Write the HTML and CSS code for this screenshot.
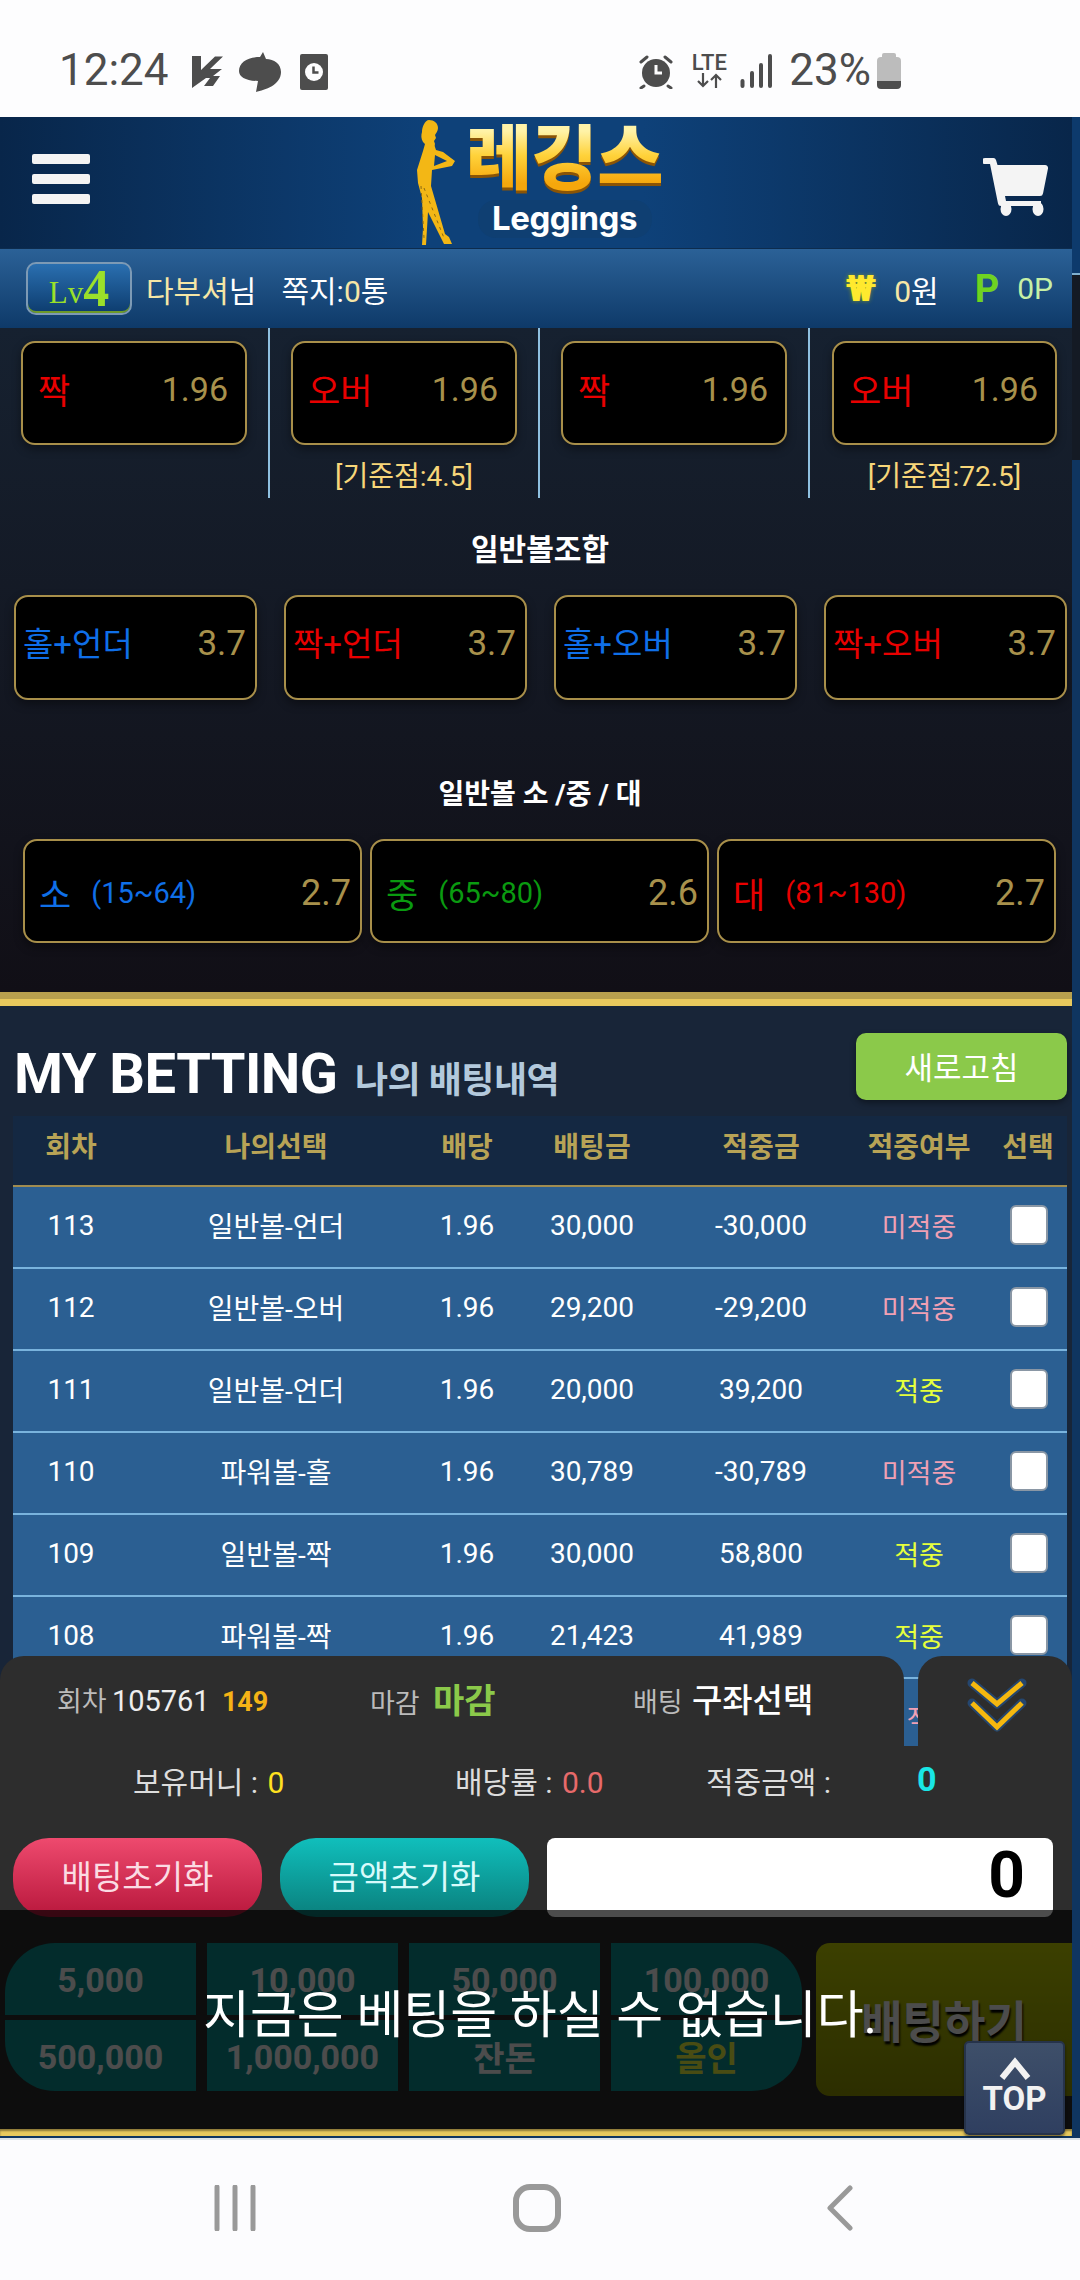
FILE: index.html
```html
<!DOCTYPE html>
<html lang="ko">
<head>
    <meta charset="UTF-8">
    <meta name="viewport" content="width=device-width, initial-scale=1.0">
    <title>Leggings</title>
    <link rel="stylesheet" href="styles.css">
</head>
<body>
<div class="phone">

    <!-- Android status bar -->
    <div class="statusbar">
        <div class="status-left">
            <span class="clock">12:24</span>
            <svg class="ic-bolt" viewBox="0 0 31 32"><path fill="#4d4d4d" d="M0 0h9v14L23 .5h8L18 13h12l-9 7h7l-7 10h-9l6-8h-4L0 32z"/></svg>
            <svg class="ic-talk" viewBox="0 0 42 40"><path fill="#4d4d4d" d="M24 0l-3 5C9 5 0 10 0 19c0 6 7 10 19 10l-2 11c9-2 25-7 25-20C42 12 35 7 27 7z"/></svg>
            <svg class="ic-clockcard" viewBox="0 0 28 36"><rect width="28" height="36" rx="2" fill="#4d4d4d"/><circle cx="14" cy="18" r="9" fill="#fdfdfe"/><path d="M13.500 12.500v6h5" fill="none" stroke="#4d4d4d" stroke-width="2.500"/></svg>
        </div>
        <div class="status-right">
            <svg class="ic-alarm" viewBox="0 0 34 34"><circle cx="17" cy="18" r="14" fill="#4d4d4d"/><path d="M17 10v8h6" fill="none" stroke="#fdfdfe" stroke-width="3"/><path d="M2 7l6-5M32 7l-6-5M5 31l-3 2M29 31l3 2" stroke="#4d4d4d" stroke-width="3" stroke-linecap="round"/></svg>
            <div class="lte">
                <span>LTE</span>
                <svg viewBox="0 0 30 15"><path d="M9 0v13M4 8l5 5 5-5M22 15V2M17 7l5-5 5 5" fill="none" stroke="#4d4d4d" stroke-width="2.200"/></svg>
            </div>
            <svg class="ic-signal" viewBox="0 0 32 34"><path d="M2.500 27v5M12 19v13M21 11v21M30 2v30" stroke="#4d4d4d" stroke-width="4" stroke-linecap="round"/></svg>
            <span class="battery-text">23%</span>
            <div class="battery"><div class="battery-cap"></div><div class="battery-body"></div></div>
        </div>
    </div>

    <div class="page">
        <div class="content">

            <header class="topbar">
                <div class="hamburger"><span></span><span></span><span></span></div>
                <div class="logo">
                    <svg class="logo-figure" viewBox="0 0 40 126">
                        <path fill="#f3b715" d="M13 0c5 0 9 3 9 8 0 3-2 5-3 7l1 3-2 3 1 3-1 3-3-1-2 2-6-6c-2-3-2-7-1-10 0-5 3-12 7-12z"/>
                        <path fill="#f3b715" fill-rule="evenodd" d="M9 24L7 31 1 50l1 13 4 15 1 30-1 17h4l2-33 16 32h8l-3-7-4-3L15 66l1-16 20-4 3-5-12-9-7-2-3-9zM19 35l12 6-13 5z"/>
                        <path fill="none" stroke="#8c6a14" stroke-width="1" stroke-dasharray="3 4" d="M5 66l3 52M8 68l20 50"/>
                    </svg>
                    <div class="logo-words">
                        <span class="logo-ko">레깅스</span>
                        <span class="logo-en">Leggings</span>
                    </div>
                </div>
                <svg class="cart" viewBox="0 0 65 58">
                    <path fill="#f4f4f4" d="M2 0h8a3 3 0 0 1 3 2l1.500 5H62a3 3 0 0 1 3 3.500l-5 25a3 3 0 0 1-3 2.500H22l1 5h35v5H18a3 3 0 0 1-3-2.500L7 6H2a3 3 0 0 1 0-6z"/>
                    <ellipse cx="23" cy="51" rx="5.500" ry="7" fill="#f4f4f4"/><ellipse cx="55" cy="51" rx="5.500" ry="7" fill="#f4f4f4"/>
                </svg>
            </header>

            <div class="userbar">
                <div class="user-left">
                    <div class="level"><span class="lv">Lv</span><span class="lv-num">4</span></div>
                    <span class="user-name">다부셔<em>님</em></span>
                    <span class="user-msg">쪽지:<b>0</b>통</span>
                </div>
                <div class="user-right">
                    <span class="won-mark">₩</span>
                    <span class="money"><b>0</b>원</span>
                    <span class="point-mark">P</span>
                    <span class="money point"><b>0P</b></span>
                </div>
            </div>

            <div class="markets">
                <div class="odds-row">
                    <div class="odds-col">
                        <div class="odds-box"><span class="red">짝</span><span class="rate">1.96</span></div>
                    </div>
                    <div class="odds-col">
                        <div class="odds-box"><span class="red">오버</span><span class="rate">1.96</span></div>
                        <p class="base">[기준점:4.5]</p>
                    </div>
                    <div class="odds-col">
                        <div class="odds-box"><span class="red">짝</span><span class="rate">1.96</span></div>
                    </div>
                    <div class="odds-col last">
                        <div class="odds-box"><span class="red">오버</span><span class="rate">1.96</span></div>
                        <p class="base">[기준점:72.5]</p>
                    </div>
                </div>

                <h3 class="market-title first">일반볼조합</h3>
                <div class="combo-row">
                    <div class="combo-box"><span class="blue">홀+언더</span><span class="rate">3.7</span></div>
                    <div class="combo-box"><span class="red">짝+언더</span><span class="rate">3.7</span></div>
                    <div class="combo-box"><span class="blue">홀+오버</span><span class="rate">3.7</span></div>
                    <div class="combo-box"><span class="red">짝+오버</span><span class="rate">3.7</span></div>
                </div>

                <h3 class="market-title second">일반볼 소 /중 / 대</h3>
                <div class="size-row">
                    <div class="size-box"><span class="size-name blue">소</span><span class="size-range blue">(15~64)</span><span class="rate">2.7</span></div>
                    <div class="size-box"><span class="size-name green">중</span><span class="size-range green">(65~80)</span><span class="rate">2.6</span></div>
                    <div class="size-box"><span class="size-name red">대</span><span class="size-range red">(81~130)</span><span class="rate">2.7</span></div>
                </div>
            </div>

            <div class="gold-bar"></div>

            <section class="history">
                <div class="history-head">
                    <h2>MY BETTING <small>나의 배팅내역</small></h2>
                    <button class="refresh">새로고침</button>
                </div>
                <table class="bets">
                    <colgroup>
                        <col class="c-round"><col class="c-pick"><col class="c-rate"><col class="c-stake"><col class="c-win"><col class="c-result"><col class="c-check">
                    </colgroup>
                    <thead>
                        <tr><th>회차</th><th>나의선택</th><th>배당</th><th>배팅금</th><th>적중금</th><th>적중여부</th><th>선택</th></tr>
                    </thead>
                    <tbody>
                        <tr><td>113</td><td>일반볼-언더</td><td>1.96</td><td>30,000</td><td>-30,000</td><td class="miss">미적중</td><td><input type="checkbox"></td></tr>
                        <tr><td>112</td><td>일반볼-오버</td><td>1.96</td><td>29,200</td><td>-29,200</td><td class="miss">미적중</td><td><input type="checkbox"></td></tr>
                        <tr><td>111</td><td>일반볼-언더</td><td>1.96</td><td>20,000</td><td>39,200</td><td class="hit">적중</td><td><input type="checkbox"></td></tr>
                        <tr><td>110</td><td>파워볼-홀</td><td>1.96</td><td>30,789</td><td>-30,789</td><td class="miss">미적중</td><td><input type="checkbox"></td></tr>
                        <tr><td>109</td><td>일반볼-짝</td><td>1.96</td><td>30,000</td><td>58,800</td><td class="hit">적중</td><td><input type="checkbox"></td></tr>
                        <tr><td>108</td><td>파워볼-짝</td><td>1.96</td><td>21,423</td><td>41,989</td><td class="hit">적중</td><td><input type="checkbox"></td></tr>
                        <tr><td></td><td></td><td></td><td></td><td></td><td class="miss">미적중</td><td></td></tr>
                    </tbody>
                </table>
            </section>
        </div>

        <!-- Bet slip docked over the page -->
        <div class="slip">
            <div class="slip-tabs">
                <div class="slip-info">
                    <span class="info-a"><i>회차</i> 105761 <b class="count">149</b></span>
                    <span class="info-b"><i>마감</i> <b class="closed">마감</b></span>
                    <span class="info-c"><i>배팅</i> <b class="account">구좌선택</b></span>
                </div>
                <div class="slip-fold">
                    <svg viewBox="0 0 60 56">
                        <path d="M5 5l25 21L55 5M5 25l25 24 25-24" fill="none" stroke="#25466e" stroke-width="9" stroke-linecap="round" stroke-linejoin="round"/>
                        <path d="M5 5l25 21L55 5M5 25l25 24 25-24" fill="none" stroke="#f5b80f" stroke-width="5"/>
                    </svg>
                </div>
            </div>
            <div class="slip-sums">
                <span class="sum-a">보유머니 : <b class="yellow">0</b></span>
                <span class="sum-b">배당률 : <b class="salmon">0.0</b></span>
                <span class="sum-c">적중금액 :</span>
                <b class="sum-d">0</b>
            </div>
            <div class="slip-actions">
                <button class="pill pill-red">배팅초기화</button>
                <button class="pill pill-teal">금액초기화</button>
                <div class="amount">0</div>
            </div>
            <div class="slip-chips">
                <div class="chips">
                    <div class="chip tl">5,000</div>
                    <div class="chip">10,000</div>
                    <div class="chip">50,000</div>
                    <div class="chip tr">100,000</div>
                    <div class="chip bl">500,000</div>
                    <div class="chip">1,000,000</div>
                    <div class="chip">잔돈</div>
                    <div class="chip br allin">올인</div>
                </div>
                <button class="place">배팅하기</button>
            </div>
        </div>

        <div class="dim"><span>지금은 베팅을 하실 수 없습니다.</span></div>

        <div class="to-top">
            <svg viewBox="0 0 32 24"><path d="M3 21L16 5l13 16" fill="none" stroke="#f2f2f2" stroke-width="6"/></svg>
            <span>TOP</span>
        </div>

        <div class="gold-foot"></div>
    </div>

    <!-- Android nav bar -->
    <nav class="navbar">
        <svg class="nav-recent" viewBox="0 0 42 46"><path d="M3 2v42M21 2v42M39 2v42" stroke="#999" stroke-width="5" stroke-linecap="round"/></svg>
        <svg class="nav-home" viewBox="0 0 48 48"><rect x="3" y="3" width="42" height="42" rx="14" fill="none" stroke="#999" stroke-width="6"/></svg>
        <svg class="nav-back" viewBox="0 0 27 46"><path d="M24 3L4 23l20 20" fill="none" stroke="#999" stroke-width="5" stroke-linecap="round" stroke-linejoin="round"/></svg>
    </nav>
</div>
</body>
</html>
```

FILE: styles.css
```css
* {
    box-sizing: border-box;
}

body {
    margin: 0;
    font-family: Roboto, "Noto Sans CJK KR", sans-serif;
    background-color: #fdfdfe;
}

.phone {
    width: 1080px;
    height: 2280px;
    overflow: hidden;
    display: flex;
    flex-direction: column;
}

/* status bar */
.statusbar {
    height: 117px;
    flex: none;
    background-color: #fdfdfe;
    color: #4d4d4d;
    position: relative;
    display: flex;
    justify-content: space-between;
    padding: 48px 179px 0 59px;
}

.status-left,
.status-right {
    display: flex;
    align-items: flex-start;
}

.clock,
.battery-text {
    font-size: 44px;
    line-height: 44px;
}

.ic-bolt {
    width: 31px;
    height: 32px;
    margin: 8px 0 0 23px;
}

.ic-talk {
    width: 42px;
    height: 40px;
    margin: 4px 0 0 16px;
}

.ic-clockcard {
    width: 28px;
    height: 36px;
    margin: 6px 0 0 19px;
}

.ic-alarm {
    width: 34px;
    height: 34px;
    margin-top: 7px;
}

.lte {
    width: 36px;
    margin: 5px 0 0 18px;
    display: flex;
    flex-direction: column;
    align-items: center;
}

.lte span {
    font-size: 22px;
    line-height: 20px;
    font-weight: 500;
}

.lte svg {
    width: 30px;
    height: 15px;
}

.ic-signal {
    width: 32px;
    height: 34px;
    margin: 6px 0 0 13px;
}

.battery-text {
    margin-left: 17px;
}

.battery {
    width: 24px;
    margin: 5px 0 0 6px;
    display: flex;
    flex-direction: column;
    align-items: center;
}

.battery-cap {
    width: 14px;
    height: 4px;
    background-color: #bcbcbc;
    border-radius: 2px 2px 0 0;
}

.battery-body {
    width: 24px;
    height: 32px;
    border-radius: 4px;
    background: linear-gradient(#bcbcbc 75%, #4d4d4d 75%);
}

/* page */
.page {
    height: 2021px;
    flex: none;
    position: relative;
    overflow: hidden;
    background: linear-gradient(#0d3a6c 0, #0d3a6c 156px, #7fb0d0 156px, #7fb0d0 158px, #141a24 158px, #141a24 343px, #0f3560 343px);
}

.content {
    width: 1072px;
    overflow: hidden;
}

.topbar {
    height: 131px;
    padding: 0 24px 0 32px;
    display: flex;
    align-items: center;
    justify-content: space-between;
    background: linear-gradient(90deg, #08264a 0%, #0e4179 40%, #0e4179 60%, #08264a 100%);
}

.hamburger {
    width: 58px;
    display: flex;
    flex-direction: column;
    gap: 10px;
    margin-top: -8px;
}

.hamburger span {
    height: 10px;
    border-radius: 2px;
    background-color: #f4f4f4;
}

.logo {
    display: flex;
    align-items: center;
    gap: 10px;
    margin-left: 6px;
}

.logo-figure {
    width: 40px;
    height: 126px;
}

.logo-words {
    width: 198px;
    display: flex;
    flex-direction: column;
    align-items: center;
}

.logo-ko {
    font-size: 72px;
    line-height: 70px;
    font-weight: 900;
    white-space: nowrap;
    letter-spacing: -0.5px;
    margin-top: -4px;
    background: linear-gradient(#fff3a8 10%, #ffd23a 45%, #f5a70c 85%);
    -webkit-background-clip: text;
    background-clip: text;
    color: transparent;
    filter: drop-shadow(0 3px 0 #8a5406);
}

.logo-en {
    margin-top: 6px;
    width: 174px;
    height: 38px;
    border-radius: 18px;
    background-color: #0f3f72;
    color: #fff;
    font-family: Inter, sans-serif;
    font-weight: 700;
    font-size: 33px;
    line-height: 36px;
    text-align: center;
    letter-spacing: -0.5px;
}

.cart {
    width: 65px;
    height: 58px;
    margin-top: 8px;
}

.userbar {
    height: 80px;
    padding: 0 19px 0 26px;
    display: flex;
    align-items: center;
    justify-content: space-between;
    background: linear-gradient(#2b6197, #0e3a69);
    border-top: 1px solid #0d2c4e;
    color: #fff;
    font-size: 30px;
}

.user-left,
.user-right {
    display: flex;
    align-items: center;
}

.level {
    width: 106px;
    height: 53px;
    border: 2px solid #7d9ab5;
    border-radius: 10px;
    background: linear-gradient(#2a6fb0, #0d3c6e);
    box-shadow: inset 0 -2px 0 #6d9a2a;
    display: flex;
    align-items: center;
    justify-content: center;
    font-family: "Liberation Serif", serif;
    font-weight: 700;
    color: #9be02a;
}

.lv {
    font-size: 31px;
    font-weight: 400;
    margin-top: 8px;
}

.lv-num {
    font-size: 52px;
    line-height: 46px;
}

.user-name {
    margin-left: 14px;
    color: #f5e6a6;
}

.user-name em {
    font-style: normal;
    color: #fff;
}

.user-msg {
    margin-left: 25px;
}

.user-msg b,
.money b {
    font-weight: 400;
    color: #f5e6a6;
}

.won-mark {
    font-family: Roboto, sans-serif;
    font-size: 36px;
    font-weight: 900;
    color: #ffe92e;
    text-shadow: 0 0 4px #7a8f2a;
}

.money {
    margin-left: 18px;
}

.point b {
    color: #c6f0a6;
}

.point-mark {
    margin-left: 36px;
    font-size: 38px;
    font-weight: 700;
    color: #6fd321;
}

/* market boxes */
.markets {
    width: 1080px;
    height: 664px;
    background: linear-gradient(#162130, #110f16);
    color: #fff;
}

.red {
    color: #e80000;
}

.blue {
    color: #0f6fe8;
}

.green {
    color: #0a9a10;
}

.rate {
    color: #a8914c;
    font-size: 34px;
}

.odds-row {
    height: 170px;
    display: grid;
    grid-template-columns: repeat(4, 270px);
}

.odds-col {
    border-right: 2px solid #8fc0e0;
    padding: 13px 21px 0 21px;
}

.odds-col.last {
    border-right: 0;
    padding: 13px 23px 0 22px;
}

.odds-box,
.combo-box,
.size-box {
    display: flex;
    align-items: center;
    justify-content: space-between;
    background-color: #000;
    border: 2px solid #a88f4a;
    border-radius: 14px;
    box-shadow: 0 4px 10px rgba(0, 0, 0, 0.4);
    font-size: 35px;
    white-space: nowrap;
}

.odds-box {
    height: 104px;
    padding: 0 17px 9px 15px;
}

.base {
    margin: 15px 0 0;
    text-align: center;
    font-size: 28px;
    line-height: 34px;
    color: #f7d679;
}

.market-title {
    margin: 0;
    display: flex;
    align-items: center;
    justify-content: center;
    font-size: 30px;
    font-weight: 700;
}

.market-title.first {
    height: 97px;
}

.market-title.second {
    height: 139px;
    padding-top: 45px;
    font-size: 28px;
}

.combo-row {
    display: grid;
    grid-template-columns: repeat(4, 243px);
    gap: 27px;
    padding-left: 14px;
}

.combo-box {
    height: 105px;
    padding: 0 9px 12px 7px;
    font-size: 33px;
}

.combo-box .rate {
    font-size: 35px;
    margin-bottom: -3px;
}

.size-row {
    display: grid;
    grid-template-columns: repeat(3, 339px);
    gap: 8px;
    padding-left: 23px;
}

.size-box {
    height: 104px;
    padding: 3px 9px 0 14px;
    justify-content: flex-start;
}

.size-name {
    font-size: 35px;
}

.size-range {
    font-size: 29px;
    margin-left: 20px;
}

.size-box .rate {
    margin-left: auto;
    font-size: 36px;
}

.gold-bar {
    height: 14px;
    background: linear-gradient(#b8a04e 50%, #e8c95d 50%);
}

/* betting history */
.history {
    height: 760px;
    padding: 27px 5px 0 13px;
    background-color: #182538;
}

.history-head {
    height: 83px;
    display: flex;
    justify-content: space-between;
    align-items: flex-start;
}

.history-head h2 {
    margin: 8px 0 0 1px;
    color: #fff;
    font-size: 56px;
    line-height: 66px;
    font-weight: 700;
    letter-spacing: -0.5px;
    white-space: nowrap;
}

.history-head small {
    margin-left: 4px;
    color: #b3c9dc;
    font-size: 36px;
    letter-spacing: -0.5px;
}

.refresh {
    width: 211px;
    height: 67px;
    border: 0;
    border-radius: 10px;
    background-color: #8bc94a;
    box-shadow: 0 3px 6px rgba(0, 0, 0, 0.4);
    color: #fff;
    font-family: inherit;
    font-size: 31px;
    padding-bottom: 4px;
}

.bets {
    width: 1054px;
    border-collapse: collapse;
    table-layout: fixed;
    color: #fff;
}

.c-round { width: 116px; }
.c-pick { width: 294px; }
.c-rate { width: 88px; }
.c-stake { width: 162px; }
.c-win { width: 176px; }
.c-result { width: 140px; }
.c-check { width: 78px; }

.bets th {
    height: 70px;
    padding: 0 0 12px;
    background-color: #142842;
    border-bottom: 2px solid #a08c50;
    color: #b8a356;
    font-size: 28px;
    font-weight: 700;
}

.bets td {
    height: 82px;
    padding: 0 0 4px;
    text-align: center;
    background-color: #2b5f92;
    border-bottom: 2px solid #79b3dd;
    font-size: 28px;
    white-space: nowrap;
}

.bets .miss {
    color: #f0a0b4;
    font-size: 27px;
}

.bets .hit {
    color: #e6ff3c;
    font-size: 27px;
}

.bets input {
    appearance: none;
    display: block;
    width: 38px;
    height: 40px;
    margin: 0 0 0 21px;
    background-color: #fff;
    border: 2px solid #8a97a5;
    border-radius: 6px;
}

/* bet slip */
.slip {
    position: absolute;
    left: 0;
    top: 1539px;
    width: 1072px;
    color: #ddd;
}

.slip-tabs {
    height: 90px;
    display: flex;
    gap: 14px;
}

.slip-info {
    width: 904px;
    position: relative;
    background-color: #2d2d2d;
    border-radius: 24px 24px 0 0;
    font-size: 29px;
}

.slip-info i {
    font-style: normal;
    font-size: 27px;
    color: #bbb;
}

.slip-info span {
    position: absolute;
    top: 27px;
    white-space: nowrap;
    line-height: 36px;
}

.info-a { left: 57px; color: #eee; word-spacing: -2px; }
.info-b { left: 370px; }
.info-c { left: 633px; }

.count {
    margin-left: 7px;
    color: #f5b316;
    font-size: 27px;
    font-weight: 700;
}

.closed {
    margin-left: 6px;
    color: #8bc94a;
    font-size: 34px;
    font-weight: 700;
}

.account {
    margin-left: 2px;
    color: #fff;
    font-size: 33px;
    font-weight: 500;
}

.slip-fold {
    width: 154px;
    background-color: #2d2d2d;
    border-radius: 24px 24px 0 0;
    display: flex;
    justify-content: center;
    padding: 22px 0 0 3px;
}

.slip-fold svg {
    width: 60px;
    height: 56px;
}

.slip-sums {
    height: 92px;
    position: relative;
    background-color: #2d2d2d;
    font-size: 30px;
}

.slip-sums > * {
    position: absolute;
    top: 17px;
    line-height: 40px;
    white-space: nowrap;
}

.sum-a { left: 133px; }
.sum-b { left: 455px; }
.sum-c { left: 706px; }

.sum-d {
    left: 917px;
    top: 13px;
    color: #19e6e6;
    font-size: 34px;
}

.yellow {
    color: #ffe020;
    font-weight: 400;
    margin-left: 2px;
}

.salmon {
    color: #e76a6a;
    font-weight: 400;
    margin-left: 2px;
}

.slip-actions {
    height: 105px;
    padding: 0 19px 0 13px;
    display: flex;
    align-items: flex-start;
    gap: 18px;
    background-color: #2d2d2d;
}

.pill {
    width: 249px;
    height: 79px;
    border: 0;
    border-radius: 36px;
    font-family: inherit;
    font-size: 33px;
    padding: 0 0 6px;
}

.pill-red {
    background: linear-gradient(#ee4a6e, #b8173c);
    color: #fbdbe3;
}

.pill-teal {
    background: linear-gradient(#10bfbc, #0a7f7c);
    color: #d8fbfb;
}

.amount {
    width: 506px;
    height: 79px;
    background-color: #fff;
    border-radius: 8px;
    padding-right: 28px;
    text-align: right;
    color: #000;
    font-size: 64px;
    line-height: 76px;
    font-weight: 700;
}

.slip-chips {
    height: 186px;
    padding-left: 5px;
    display: flex;
    align-items: flex-start;
    background-color: #2d2d2d;
}

.chips {
    width: 796px;
    display: grid;
    grid-template-columns: repeat(4, 191px);
    grid-template-rows: 72px 71px;
    gap: 5px 11px;
}

.chip {
    display: flex;
    align-items: center;
    justify-content: center;
    background-color: #0a9393;
    color: #fff;
    font-size: 34px;
    font-weight: 700;
    padding-top: 2px;
}

.chip.tl { border-top-left-radius: 50px; }
.chip.tr { border-top-right-radius: 50px; }
.chip.bl { border-bottom-left-radius: 50px; }
.chip.br { border-bottom-right-radius: 50px; }

.chip.allin {
    color: #f6ff42;
}

.place {
    width: 256px;
    height: 153px;
    margin-left: 15px;
    border: 0;
    border-radius: 14px 0 0 14px;
    background: linear-gradient(#c8d500, #939a00);
    color: #fff;
    font-family: inherit;
    font-size: 45px;
    font-weight: 700;
    text-shadow: 1px 3px 2px #000;
    padding: 0;
}

/* dim layer with the notice */
.dim {
    position: absolute;
    left: 0;
    top: 1793px;
    width: 1072px;
    height: 219px;
    background-color: rgba(0, 0, 0, 0.7);
    display: flex;
    align-items: center;
    justify-content: center;
    padding: 0 0 18px 8px;
    color: #fff;
    font-size: 51px;
    white-space: nowrap;
}

.gold-foot {
    position: absolute;
    left: 0;
    top: 2012px;
    width: 1072px;
    height: 7px;
    background-color: #e8c95d;
    box-shadow: inset 0 2px 2px rgba(0, 0, 0, 0.4);
}

.to-top {
    position: absolute;
    z-index: 2;
    left: 964px;
    top: 1924px;
    width: 101px;
    height: 94px;
    border: 2px solid #26334a;
    border-radius: 5px;
    background: linear-gradient(#3e4f69, #2f3f60);
    box-shadow: 0 2px 3px rgba(0, 0, 0, 0.5);
    display: flex;
    flex-direction: column;
    align-items: center;
    color: #f2f2f2;
    font-weight: 700;
    font-size: 33px;
    line-height: 30px;
    padding-top: 14px;
}

.to-top svg {
    width: 32px;
    height: 24px;
    margin-bottom: 3px;
}

/* nav bar */
.navbar {
    height: 142px;
    flex: none;
    border-top: 2px solid #dde3e8;
    background-color: #fcfcfe;
    position: relative;
}

.navbar svg {
    position: absolute;
}

.nav-recent {
    left: 214px;
    top: 45px;
    width: 42px;
    height: 46px;
}

.nav-home {
    left: 513px;
    top: 44px;
    width: 48px;
    height: 48px;
}

.nav-back {
    left: 826px;
    top: 45px;
    width: 27px;
    height: 46px;
}
```
